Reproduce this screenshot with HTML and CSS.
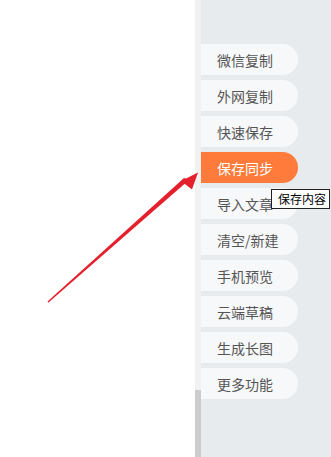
FILE: index.html
```html
<!DOCTYPE html>
<html lang="zh">
<head>
<meta charset="utf-8">
<link rel="stylesheet" href="styles.css">
</head>
<body>
<div class="page">
  <div class="content"></div>
  <div class="scrollbar"><div class="thumb"></div></div>
  <div class="panel">
    <div class="btn">微信复制</div>
    <div class="btn">外网复制</div>
    <div class="btn">快速保存</div>
    <div class="btn active">保存同步</div>
    <div class="btn">导入文章</div>
    <div class="btn">清空/新建</div>
    <div class="btn">手机预览</div>
    <div class="btn">云端草稿</div>
    <div class="btn">生成长图</div>
    <div class="btn">更多功能</div>
  </div>
</div>
<div class="tooltip">保存内容</div>
<svg class="arrow" width="331" height="457" viewBox="0 0 331 457">
  <polygon points="47.5,301.5 48.5,302.5 189,180 184,178" fill="#e3202c"/>
  <polygon points="198,172.5 181,181 192,189.5" fill="#e3202c"/>
</svg>
</body>
</html>
```
FILE: styles.css
```css
html, body {
  margin: 0;
  padding: 0;
}
body {
  width: 331px;
  height: 457px;
  overflow: hidden;
  font-family: "Noto Sans CJK SC", "Noto Sans", sans-serif;
  position: relative;
}
.page {
  display: flex;
  height: 457px;
}
.content {
  width: 195px;
  background: #ffffff;
}
.scrollbar {
  width: 6px;
  background: #f1f1f1;
  display: flex;
  flex-direction: column;
  justify-content: flex-end;
}
.thumb {
  height: 67px;
  background: #cdcdcd;
}
.panel {
  flex: 1;
  background: #e8ebee;
  padding-top: 44px;
  display: flex;
  flex-direction: column;
  gap: 5px;
}
.btn {
  width: 97px;
  height: 31px;
  box-sizing: border-box;
  padding-left: 16px;
  display: flex;
  align-items: center;
  background: #f7f8fa;
  border-radius: 0 16px 16px 0;
  font-size: 14px;
  color: #555555;
  white-space: nowrap;
}
.btn.active {
  background: #fe7b3b;
  color: #ffffff;
}
.tooltip {
  position: absolute;
  left: 271px;
  top: 189px;
  padding: 1px 3px 1px 6px;
  background: #ffffff;
  border: 1px solid #222;
  font-size: 12px;
  line-height: 16px;
  color: #000;
}
.arrow {
  position: absolute;
  left: 0;
  top: 0;
}
```
